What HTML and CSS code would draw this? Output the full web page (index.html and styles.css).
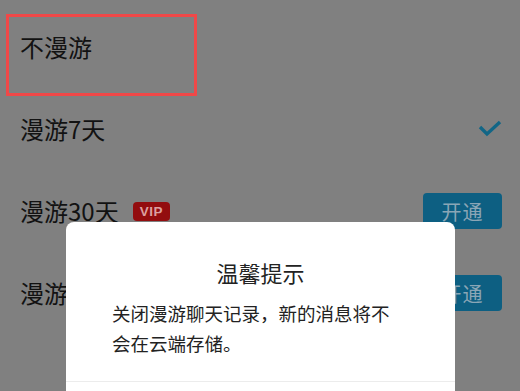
FILE: index.html
```html
<!DOCTYPE html>
<html lang="zh-CN">
<head>
<meta charset="utf-8">
<title>漫游设置</title>
<link rel="stylesheet" href="styles.css">
</head>
<body>
<div class="page">
  <div class="list">
    <div class="row"><span class="label">不漫游</span></div>
    <div class="row">
      <span class="label">漫游7天</span>
      <svg class="check" width="24" height="18" viewBox="0 0 24 18"><polyline points="2,7 9,14 22,2" fill="none" stroke="#126686" stroke-width="3.4" stroke-linecap="butt" stroke-linejoin="miter"/></svg>
    </div>
    <div class="row">
      <span class="label">漫游30天<span class="vip">VIP</span></span>
      <span class="btn">开通</span>
    </div>
    <div class="row">
      <span class="label">漫游365天<span class="vip">SVIP</span></span>
      <span class="btn">开通</span>
    </div>
  </div>
  <div class="mark"></div>
  <div class="dialog">
    <div class="title">温馨提示</div>
    <div class="body">关闭漫游聊天记录，新的消息将不会在云端存储。</div>
    <div class="divider"></div>
  </div>
</div>
</body>
</html>
```
FILE: styles.css
```css
html, body {
  margin: 0;
  padding: 0;
}
body {
  background: #808080;
  font-family: "Noto Sans CJK SC", "Noto Sans", sans-serif;
  width: 520px;
  height: 391px;
  overflow: hidden;
}
.page {
  position: relative;
  width: 520px;
  height: 391px;
  overflow: hidden;
}
.list {
  padding-top: 6px;
}
.row {
  height: 82px;
  display: flex;
  align-items: center;
  justify-content: space-between;
  padding: 0 18px 0 20px;
}
.label {
  font-size: 24px;
  color: #121212;
  display: flex;
  align-items: center;
  line-height: 30px;
}
.vip {
  display: inline-block;
  margin-left: 14px;
  background: #930d0f;
  color: #dca0a0;
  font-family: "Liberation Sans", Arial, sans-serif;
  font-weight: bold;
  font-size: 13.5px;
  line-height: 19px;
  height: 19px;
  padding: 0 7px;
  border-radius: 4px;
  letter-spacing: 0.5px;
}
.check {
  display: block;
}
.btn {
  width: 79px;
  height: 36px;
  border-radius: 4px;
  background: #0d5f82;
  color: #8aa6b6;
  font-size: 20px;
  display: flex;
  align-items: center;
  justify-content: center;
  letter-spacing: 1px;
}
.mark {
  position: absolute;
  left: 6px;
  top: 14px;
  width: 185px;
  height: 76px;
  border: 3px solid #f04848;
}
.dialog {
  position: absolute;
  left: 66px;
  top: 222px;
  width: 389px;
  height: 220px;
  background: #ffffff;
  border-radius: 8px;
  padding-top: 36px;
  box-sizing: border-box;
}
.title {
  text-align: center;
  font-size: 22px;
  line-height: 28px;
  color: #222;
}
.body {
  margin: 12px 0 0 46px;
  width: 282px;
  font-size: 18.5px;
  line-height: 30px;
  color: #222;
}
.divider {
  margin-top: 23px;
  height: 1px;
  background: #ececec;
}
```
